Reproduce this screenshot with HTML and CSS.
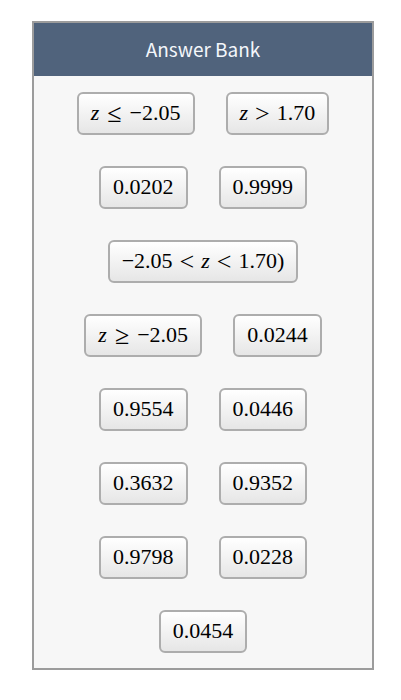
FILE: index.html
```
<!DOCTYPE html>
<html lang="en">
<head>
<meta charset="utf-8">
<meta name="viewport" content="width=device-width, initial-scale=1">
<title>Answer Bank</title>
<link rel="stylesheet" href="styles.css">
</head>
<body>
<section class="bank" aria-labelledby="bank-title">
  <h2 class="bank-title" id="bank-title">Answer Bank</h2>
  <div class="bank-items">
    <button type="button" class="tile"><i>z</i><span class="rel rel-wide">≤</span>−2.05</button>
    <button type="button" class="tile"><i>z</i><span class="rel">&gt;</span>1.70</button>
    <button type="button" class="tile">0.0202</button>
    <button type="button" class="tile">0.9999</button>
    <button type="button" class="tile">−2.05<span class="rel">&lt;</span><i>z</i><span class="rel">&lt;</span>1.70)</button>
    <button type="button" class="tile"><i>z</i><span class="rel rel-wide">≥</span>−2.05</button>
    <button type="button" class="tile">0.0244</button>
    <button type="button" class="tile">0.9554</button>
    <button type="button" class="tile">0.0446</button>
    <button type="button" class="tile">0.3632</button>
    <button type="button" class="tile">0.9352</button>
    <button type="button" class="tile">0.9798</button>
    <button type="button" class="tile">0.0228</button>
    <button type="button" class="tile">0.0454</button>
  </div>
</section>
</body>
</html>
```
FILE: styles.css
```
* {
  box-sizing: border-box;
}

body {
  margin: 0;
  padding: 21px 27px 30px 32px;
  background: #fff;
}

.bank {
  border: 2px solid #9c9c9c;
  background: #f7f7f7;
}

.bank-title {
  margin: 0;
  padding: 11px 12px 13px;
  background: #50637c;
  color: #f4f7fb;
  font: 400 19px/29px "Noto Sans CJK SC", "Noto Sans", sans-serif;
  text-align: center;
}

.bank-items {
  display: flex;
  flex-wrap: wrap;
  justify-content: center;
  gap: 31px;
  padding: 16px 16px 15px;
}

.tile {
  height: 43px;
  padding: 0 12px 2px;
  border: 2px solid #adadad;
  border-radius: 6px;
  background: linear-gradient(#fff, #e6e6e6);
  color: #000;
  font: 22px/26px "Liberation Serif", serif;
  white-space: nowrap;
  cursor: pointer;
}

.rel {
  margin: 0 7px;
  font-size: 26px;
  line-height: 16px;
  vertical-align: -2px;
}

.rel-wide {
  margin: 0 8px;
}
```
